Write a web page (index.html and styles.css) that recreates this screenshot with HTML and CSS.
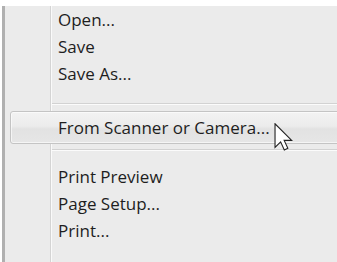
FILE: index.html
```html
<!DOCTYPE html>
<html>
<head>
<meta charset="utf-8">
<link rel="stylesheet" href="styles.css">
</head>
<body>
<div class="screen">
  <div class="menu">
    <div class="item">Open...</div>
    <div class="item">Save</div>
    <div class="item">Save As...</div>
    <div class="sep sep-top"></div>
    <div class="item hot">From Scanner or Camera...</div>
    <div class="sep sep-bottom"></div>
    <div class="item">Print Preview</div>
    <div class="item">Page Setup...</div>
    <div class="item">Print...</div>
    <svg class="cursor" width="19" height="28" viewBox="0 0 12.5 19">
      <path d="M0.5,0.5 L0.5,16.5 L4.3,12.8 L6.8,18.3 L9.2,17.2 L6.7,11.8 L11.8,11.8 Z" fill="#fff" stroke="#222" stroke-width="0.75" stroke-linejoin="miter"/>
    </svg>
  </div>
</div>
</body>
</html>
```
FILE: styles.css
```css
html, body {
  margin: 0;
  padding: 0;
  background: #ffffff;
}
.screen {
  width: 337px;
  height: 262px;
  padding: 6px 0 0 2px;
  box-sizing: border-box;
  overflow: hidden;
}
.menu {
  position: relative;
  height: 100%;
  border-left: 3px solid #b0b0b0;
  background-color: #ebebeb;
  background-image: linear-gradient(to right, transparent 45px, #d4d4d4 45px, #d4d4d4 46px, #fafafa 46px, #fafafa 47px, transparent 47px);
  display: flex;
  flex-direction: column;
  font-family: "Open Sans", "Noto Sans", sans-serif;
  font-size: 17px;
  color: #1e1e1e;
}
.item {
  height: 27px;
  line-height: 27px;
  padding-left: 53px;
  white-space: nowrap;
}
.sep {
  margin-left: 47px;
  border-top: 1px solid #d2d2d2;
  border-bottom: 1px solid #fbfbfb;
}
.sep-top {
  margin-top: 16px;
  margin-bottom: 6px;
}
.sep-bottom {
  margin-top: 5px;
  margin-bottom: 12px;
}
.hot {
  height: 31px;
  line-height: 31px;
  margin-left: 5px;
  margin-right: -10px;
  padding-left: 47px;
  border: 1px solid #c4c4c4;
  border-radius: 3px;
  background: linear-gradient(to bottom, #f3f3f3 0%, #ececec 45%, #e2e2e2 55%, #e6e6e6 100%);
  box-shadow: inset 0 0 0 1px rgba(255,255,255,0.6);
}
.cursor {
  position: absolute;
  left: 269px;
  top: 117px;
}
```
